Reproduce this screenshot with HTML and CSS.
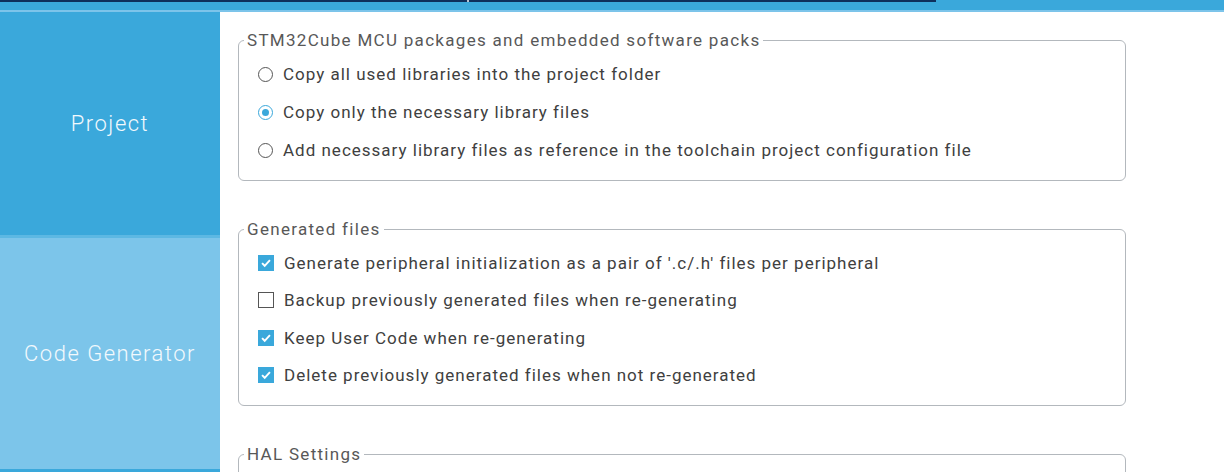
FILE: index.html
```html
<!DOCTYPE html>
<html lang="en">
<head>
<meta charset="UTF-8">
<title>Project Manager</title>
<link rel="stylesheet" href="styles.css">
</head>
<body>
<div class="topbar">
    <div class="tabs">
        <div class="tab"></div>
        <div class="tab"></div>
    </div>
</div>
<div class="main">
    <div class="sidebar">
        <div class="nav-item active">Project</div>
        <div class="nav-item">Code Generator</div>
    </div>
    <div class="content">
        <fieldset class="group">
            <legend>STM32Cube MCU packages and embedded software packs</legend>
            <div class="row"><span class="radio"></span>Copy all used libraries into the project folder</div>
            <div class="row"><span class="radio on"></span>Copy only the necessary library files</div>
            <div class="row"><span class="radio"></span>Add necessary library files as reference in the toolchain project configuration file</div>
        </fieldset>
        <fieldset class="group files">
            <legend>Generated files</legend>
            <div class="row"><span class="check on"><svg viewBox="0 0 16 16"><path d="M3.5 8.2l3 3 6-6.5"/></svg></span>Generate peripheral initialization as a pair of '.c/.h' files per peripheral</div>
            <div class="row"><span class="check"></span>Backup previously generated files when re-generating</div>
            <div class="row"><span class="check on"><svg viewBox="0 0 16 16"><path d="M3.5 8.2l3 3 6-6.5"/></svg></span>Keep User Code when re-generating</div>
            <div class="row"><span class="check on"><svg viewBox="0 0 16 16"><path d="M3.5 8.2l3 3 6-6.5"/></svg></span>Delete previously generated files when not re-generated</div>
        </fieldset>
        <fieldset class="group">
            <legend>HAL Settings</legend>
            <div class="row"></div>
        </fieldset>
    </div>
</div>
</body>
</html>
```
FILE: styles.css
```css
body{
    margin: 0;
    width: 1224px;
    height: 472px;
    overflow: hidden;
    background: #fff;
    font-family: Roboto, "Liberation Sans", sans-serif;
}
.topbar{
    height: 10px;
    background: #3aa8db;
    border-bottom: 2px solid #7cc4ea;
}
.tabs{
    display: flex;
    gap: 2px;
    width: 936px;
    height: 2px;
    background: #b9c3d0;
}
.tab{
    flex: 1;
    background: #0e2f5c;
}
.main{
    display: flex;
    height: 460px;
    overflow: hidden;
}
.sidebar{
    width: 220px;
    display: flex;
    flex-direction: column;
    border-bottom: 3px solid #3aa8db;
}
.nav-item{
    flex: 1;
    display: flex;
    align-items: center;
    justify-content: center;
    background: #7cc5ea;
    color: #f2f9fd;
    font-size: 22px;
    font-weight: 300;
    letter-spacing: 1.5px;
}
.nav-item.active{
    flex: none;
    height: 223px;
    background: #3aa8db;
    border-bottom: 3px solid #5cb8e3;
}
.content{
    flex: 1;
    padding: 18px 0 0 18px;
    overflow: hidden;
}
.group{
    width: 867px;
    margin: 0 0 38px 0;
    padding: 5px 0 11px 19px;
    border: 1px solid #b3b8bd;
    border-radius: 6px;
    color: #404040;
    font-size: 17px;
    letter-spacing: 1px;
}
.group legend{
    margin-left: -14px;
    padding: 0 3px;
    line-height: 20px;
    color: #585858;
    letter-spacing: 1.3px;
}
.row{
    height: 38px;
    display: flex;
    align-items: center;
    gap: 10px;
    white-space: nowrap;
}
.files .row{
    height: 37.5px;
}
.radio{
    width: 13px;
    height: 13px;
    border: 1.5px solid #555;
    border-radius: 50%;
    box-sizing: content-box;
    position: relative;
}
.radio.on{
    border-color: #3aa8db;
}
.radio.on::after{
    content: "";
    position: absolute;
    left: 3px;
    top: 3px;
    width: 7px;
    height: 7px;
    border-radius: 50%;
    background: #3aa8db;
}
.check{
    width: 14px;
    height: 14px;
    border: 1px solid #555;
    background: #fff;
}
.check.on{
    border-color: #3aa8db;
    background: #3aa8db;
}
.check svg{
    display: block;
    width: 14px;
    height: 14px;
    fill: none;
    stroke: #fff;
    stroke-width: 2.2;
}
```
